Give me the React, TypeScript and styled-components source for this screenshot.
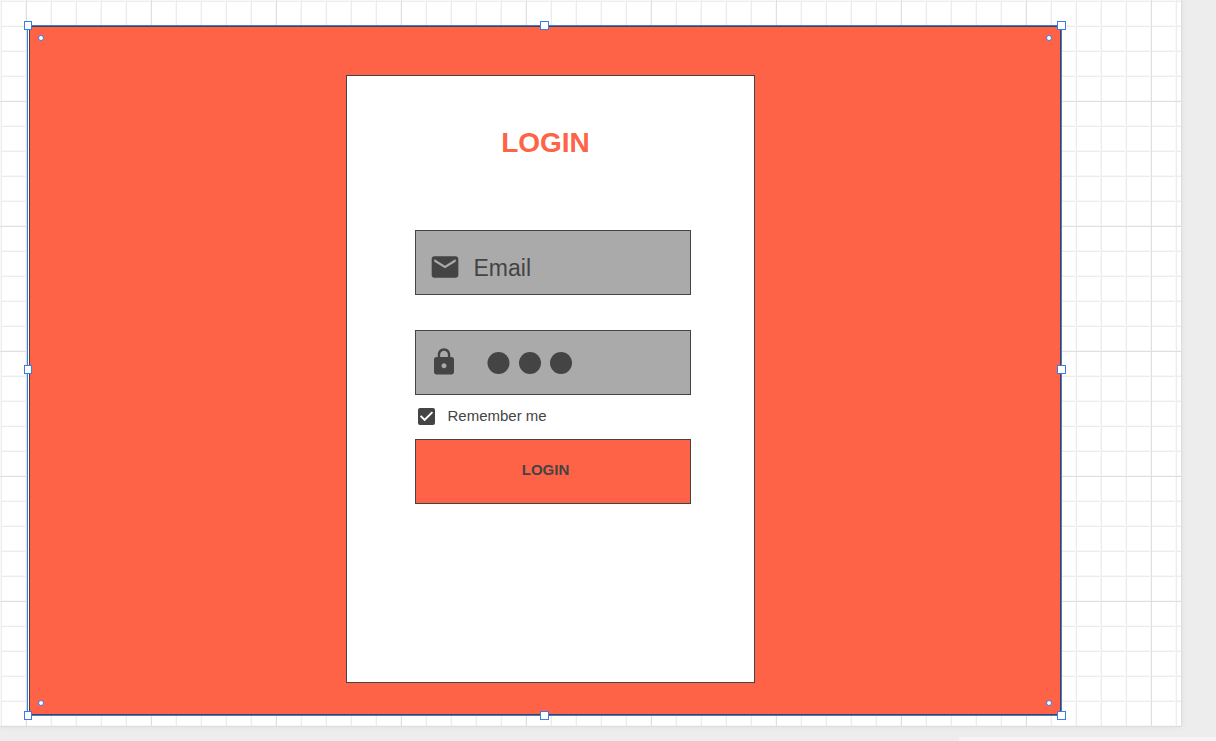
import React, { useState } from "react";
import styled, { createGlobalStyle } from "styled-components";

const coral = "#ff6347";
const ink = "#444444";
const select = "#3f7ae6";

const GlobalStyle = createGlobalStyle`
  *, *::before, *::after { box-sizing: border-box; }
  body {
    margin: 0;
    background: #ededed;
    font-family: "Liberation Sans", Arial, Helvetica, sans-serif;
    color: ${ink};
  }
`;

const Workspace = styled.main`
  position: relative;
  min-height: 100vh;
  padding: 0 34px 14px 0;
  display: flex;
  overflow: hidden;
`;

const Sheet = styled.div`
  flex: 1;
  display: flex;
  padding: 25px 119px 10px 27px;
  border-right: 1px solid #dddddd;
  border-bottom: 1px solid #dddddd;
  box-shadow: 0 0 6px rgba(0, 0, 0, 0.06);
  background-color: #ffffff;
  background-image:
    linear-gradient(90deg, #dfdfdf 1px, transparent 1px),
    linear-gradient(#dfdfdf 1px, transparent 1px),
    linear-gradient(90deg, #f8f8f8 1px, #ececec 1px, #ececec 2px, transparent 2px),
    linear-gradient(#f8f8f8 1px, #ececec 1px, #ececec 2px, transparent 2px);
  background-size: 125px 125px, 125px 125px, 25px 25px, 25px 25px;
  background-position: 26px 0, 0 101px, 0 0, 0 0;
`;

const ScrollTrack = styled.div`
  position: absolute;
  right: 0;
  bottom: 0;
  width: 257px;
  height: 4px;
  background: #f5f5f5;
`;

const Selection = styled.section`
  position: relative;
  flex: 1;
  display: flex;
  border: 1px solid ${select};
  padding-left: 1px;
  background: #ffffff;
`;

const Artboard = styled.div`
  flex: 1;
  display: flex;
  justify-content: center;
  align-items: flex-start;
  padding: 48px 0 31px 10px;
  border: 1px solid ${ink};
  background: ${coral};
`;

const Handle = styled.span<{ $x: "left" | "center" | "right"; $y: "top" | "middle" | "bottom" }>`
  position: absolute;
  width: ${(p) => (p.$x === "left" ? 8 : 9)}px;
  height: 9px;
  border: 1px solid ${select};
  background: #ffffff;
  ${(p) => p.$x === "left" && "left: -4px;"}
  ${(p) => p.$x === "center" && "left: calc(50% - 5px);"}
  ${(p) => p.$x === "right" && "right: -5px;"}
  ${(p) => p.$y === "top" && "top: -5px;"}
  ${(p) => p.$y === "middle" && "top: calc(50% - 6px);"}
  ${(p) => p.$y === "bottom" && "bottom: -5px;"}
`;

const Radius = styled.span<{ $x: "left" | "right"; $y: "top" | "bottom" }>`
  position: absolute;
  width: 6px;
  height: 6px;
  border: 1px solid ${select};
  border-radius: 50%;
  background: #ffffff;
  ${(p) => (p.$x === "left" ? "left: 10px;" : "right: 9px;")}
  ${(p) => p.$y}: 9px;
`;

const Card = styled.form`
  width: 409px;
  min-height: 608px;
  padding: 51px 63px 48px 68px;
  border: 1px solid ${ink};
  background: #ffffff;
  display: flex;
  flex-direction: column;
`;

const Title = styled.h1`
  margin: 0 0 71px;
  padding-right: 14px;
  font-size: 28px;
  line-height: 32px;
  text-align: center;
  color: ${coral};
`;

const Field = styled.label<{ $low?: boolean }>`
  display: flex;
  align-items: center;
  height: 65px;
  padding: ${(p) => (p.$low ? "8px 12px 0 13px" : "0 12px 1px 13px")};
  border: 1px solid ${ink};
  background: #aaaaaa;

  & + & { margin-top: 35px; }
`;

const FieldIcon = styled.svg<{ $size: number }>`
  flex: none;
  width: ${(p) => p.$size}px;
  height: ${(p) => p.$size}px;
  fill: ${ink};
`;

const TextInput = styled.input`
  flex: 1;
  min-width: 0;
  margin-left: 13px;
  padding: 2px 0 0;
  border: 0;
  outline: 0;
  background: transparent;
  font-family: inherit;
  font-size: 23px;
  line-height: 28px;
  color: ${ink};

  &::placeholder { color: ${ink}; opacity: 1; }
`;

const Dots = styled.svg`
  flex: none;
  width: 86px;
  height: 24px;
  margin-left: 28px;
  fill: ${ink};
`;

const Remember = styled.label`
  display: flex;
  align-items: center;
  gap: 13px;
  height: 44px;
  padding: 0 0 2px 3px;
  font-size: 15px;
  line-height: 18px;
`;

const TickWrap = styled.span`
  display: grid;
  width: 17px;
  height: 17px;

  & > * { grid-area: 1 / 1; }
`;

const Tick = styled.input`
  appearance: none;
  width: 17px;
  height: 17px;
  margin: 0;
  border: 2px solid ${ink};
  border-radius: 2px;

  &:checked { background: ${ink}; }
`;

const TickMark = styled.svg`
  width: 17px;
  height: 17px;
  fill: #ffffff;
  pointer-events: none;
`;

const Submit = styled.button`
  height: 65px;
  padding: 0 14px 4px 0;
  border: 1px solid ${ink};
  border-radius: 0;
  background: ${coral};
  font-family: inherit;
  font-size: 15px;
  font-weight: 700;
  line-height: 18px;
  color: ${ink};
  cursor: pointer;
`;

export default function App() {
  const [remember, setRemember] = useState(true);

  return (
    <>
      <GlobalStyle />
      <Workspace>
        <Sheet>
          <Selection>
            <Artboard>
              <Card onSubmit={(e) => e.preventDefault()}>
                <Title>LOGIN</Title>
                <Field $low>
                  <FieldIcon $size={32} viewBox="0 0 24 24" aria-hidden="true">
                    <path d="M20 4H4c-1.1 0-1.99.9-1.99 2L2 18c0 1.1.9 2 2 2h16c1.1 0 2-.9 2-2V6c0-1.1-.9-2-2-2zm0 4l-8 5-8-5V6l8 5 8-5v2z" />
                  </FieldIcon>
                  <TextInput type="email" placeholder="Email" aria-label="Email" />
                </Field>
                <Field>
                  <FieldIcon $size={30} viewBox="0 0 24 24" aria-hidden="true">
                    <path d="M18 8h-1V6c0-2.76-2.24-5-5-5S7 3.24 7 6v2H6c-1.1 0-2 .9-2 2v10c0 1.1.9 2 2 2h12c1.1 0 2-.9 2-2V10c0-1.1-.9-2-2-2zm-6 9c-1.1 0-2-.9-2-2s.9-2 2-2 2 .9 2 2-.9 2-2 2zm3.1-9H8.9V6c0-1.71 1.39-3.1 3.1-3.1 1.71 0 3.1 1.39 3.1 3.1v2z" />
                  </FieldIcon>
                  <Dots viewBox="0 0 86 24" aria-hidden="true">
                    <circle cx="11.5" cy="13" r="11" />
                    <circle cx="43" cy="13" r="11" />
                    <circle cx="74" cy="13" r="11" />
                  </Dots>
                  <TextInput type="password" aria-label="Password" />
                </Field>
                <Remember>
                  <TickWrap>
                    <Tick
                      type="checkbox"
                      checked={remember}
                      onChange={(e) => setRemember(e.target.checked)}
                    />
                    {remember && (
                      <TickMark viewBox="3 3 18 18" aria-hidden="true">
                        <path d="M10 17l-5-5 1.41-1.41L10 14.17l7.59-7.59L19 8l-9 9z" />
                      </TickMark>
                    )}
                  </TickWrap>
                  Remember me
                </Remember>
                <Submit type="submit">LOGIN</Submit>
              </Card>
            </Artboard>
            <Handle $x="left" $y="top" />
            <Handle $x="center" $y="top" />
            <Handle $x="right" $y="top" />
            <Handle $x="left" $y="middle" />
            <Handle $x="right" $y="middle" />
            <Handle $x="left" $y="bottom" />
            <Handle $x="center" $y="bottom" />
            <Handle $x="right" $y="bottom" />
            <Radius $x="left" $y="top" />
            <Radius $x="right" $y="top" />
            <Radius $x="left" $y="bottom" />
            <Radius $x="right" $y="bottom" />
          </Selection>
        </Sheet>
        <ScrollTrack />
      </Workspace>
    </>
  );
}
